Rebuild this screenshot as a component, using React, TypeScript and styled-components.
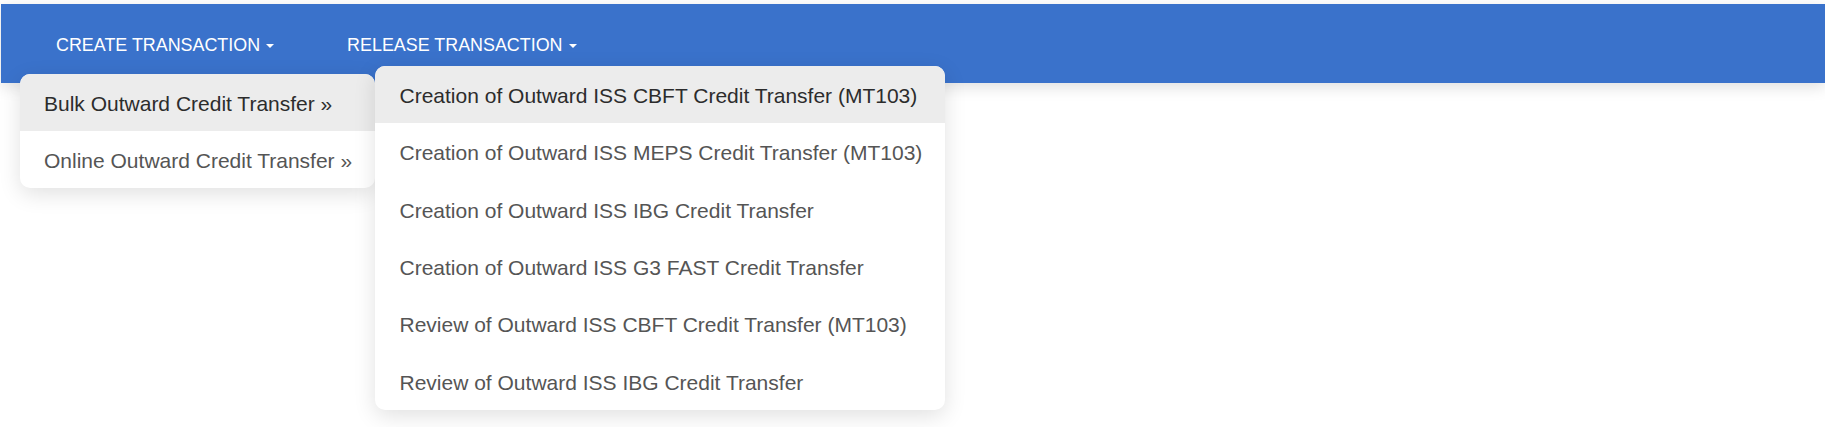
import React from "react";
import styled, { createGlobalStyle } from "styled-components";

const GlobalStyle = createGlobalStyle`
  html, body {
    margin: 0;
    padding: 0;
    background: #ffffff;
    font-family: "Liberation Sans", Arial, Helvetica, sans-serif;
  }
`;

const Page = styled.div`
  padding: 4px 0 0 1px;
  min-height: 423px;
  background: #ffffff;
`;

const Navbar = styled.nav`
  position: relative;
  z-index: 1;
  display: flex;
  align-items: stretch;
  height: 79px;
  padding-left: 18.5px;
  background: #3a72cb;
  box-shadow: 0 4px 14px rgba(0, 0, 0, 0.13);
`;

const NavItem = styled.div`
  position: relative;
  display: flex;
  align-items: center;
  padding: 3px 36.5px 0;
  color: #ffffff;
  font-size: 17.9px;
  text-transform: uppercase;
  white-space: nowrap;
  cursor: pointer;
`;

const Caret = styled.span`
  display: inline-block;
  margin-left: 6px;
  margin-top: 1px;
  width: 0;
  height: 0;
  border-left: 4.5px solid transparent;
  border-right: 4.5px solid transparent;
  border-top: 4.5px solid #ffffff;
`;

const Dropdown = styled.div<{ $width: number }>`
  position: absolute;
  top: calc(100% - 9px);
  left: 0;
  z-index: 2;
  width: ${(p) => p.$width}px;
  background: #ffffff;
  border-radius: 10px;
  box-shadow: 0 6px 22px rgba(0, 0, 0, 0.12);
  text-transform: none;
`;

const SubMenu = styled.div<{ $width: number }>`
  position: absolute;
  top: -8px;
  left: 100%;
  z-index: 5;
  width: ${(p) => p.$width}px;
  background: #ffffff;
  border-radius: 10px;
  box-shadow: 0 6px 22px rgba(0, 0, 0, 0.12);
`;

const MenuItem = styled.div<{ $active?: boolean; $height: number }>`
  position: relative;
  display: flex;
  align-items: center;
  box-sizing: border-box;
  height: ${(p) => p.$height}px;
  padding: 3px 25px 0 24.5px;
  font-size: 21px;
  color: ${(p) => (p.$active ? "#2c2c2c" : "#555555")};
  background: ${(p) => (p.$active ? "#ececec" : "transparent")};
  white-space: nowrap;
  cursor: pointer;

  &:first-child {
    border-top-left-radius: 10px;
    border-top-right-radius: 10px;
  }
  &:last-child {
    border-bottom-left-radius: 10px;
    border-bottom-right-radius: 10px;
  }
`;

const subItems = [
  "Creation of Outward ISS CBFT Credit Transfer (MT103)",
  "Creation of Outward ISS MEPS Credit Transfer (MT103)",
  "Creation of Outward ISS IBG Credit Transfer",
  "Creation of Outward ISS G3 FAST Credit Transfer",
  "Review of Outward ISS CBFT Credit Transfer (MT103)",
  "Review of Outward ISS IBG Credit Transfer",
];

export default function App() {
  return (
    <>
      <GlobalStyle />
      <Page>
        <Navbar>
          <NavItem>
            Create Transaction
            <Caret />
            <Dropdown $width={355.5}>
              <MenuItem $active $height={57}>
                Bulk Outward Credit Transfer »
                <SubMenu $width={570}>
                  {subItems.map((label, i) => (
                    <MenuItem key={label} $active={i === 0} $height={57.33}>
                      {label}
                    </MenuItem>
                  ))}
                </SubMenu>
              </MenuItem>
              <MenuItem $height={57}>Online Outward Credit Transfer »</MenuItem>
            </Dropdown>
          </NavItem>
          <NavItem>
            Release Transaction
            <Caret />
          </NavItem>
        </Navbar>
      </Page>
    </>
  );
}
